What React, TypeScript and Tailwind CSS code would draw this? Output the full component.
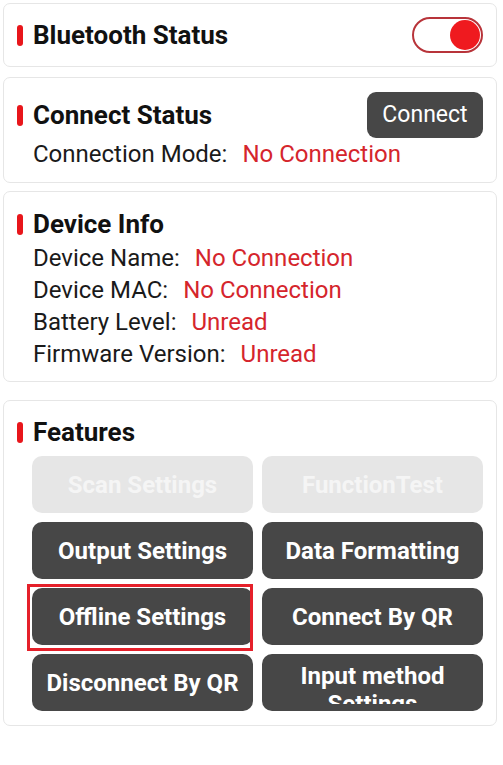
import React from "react";

const font = { fontFamily: "Roboto, 'Noto Sans', sans-serif" };

function Title({ children }: { children: React.ReactNode }) {
  return (
    <div className="flex items-center h-[32px]">
      <span className="block w-[6px] h-[21px] rounded-full bg-[#e8161b] mr-[10px]" />
      <span className="text-[26px] font-bold text-[#111] leading-[32px]">{children}</span>
    </div>
  );
}

function Row({ label, value }: { label: string; value: string }) {
  return (
    <div className="pl-[16px] h-[32px] leading-[32px] text-[24px] whitespace-nowrap">
      <span className="text-[#1a1a1a]">{label}</span>
      <span className="ml-[15px] text-[#d5252c]">{value}</span>
    </div>
  );
}

function Btn({ label, disabled, clip }: { label: string; disabled?: boolean; clip?: boolean }) {
  return (
    <div
      className={
        "h-[57px] rounded-[10px] flex items-center justify-center text-center font-bold text-[24px] px-[8px] overflow-hidden " +
        (disabled ? "bg-[#e6e6e6] text-[#f5f5f5]" : "bg-[#474747] text-white")
      }
    >
      {clip ? (
        <div className="h-[42px] overflow-hidden self-start mt-[8px] leading-[28px]">
          Input method
          <br />
          Settings
        </div>
      ) : (
        <span className="leading-[28px] whitespace-nowrap">{label}</span>
      )}
    </div>
  );
}

export default function App() {
  return (
    <div className="w-[503px] h-[765px] bg-white pt-[3px]" style={font}>
      <div className="ml-[3px] mr-[6px] border border-[#e6e6e6] rounded-[7px] px-[13px] py-[13px] flex items-center justify-between">
        <Title>Bluetooth Status</Title>
        <div className="w-[71px] h-[36px] rounded-full border-2 border-[#b8343a] bg-white flex items-center justify-end pr-[1px]">
          <div className="w-[30px] h-[30px] rounded-full bg-[#ef1a1f]" />
        </div>
      </div>

      <div className="mt-[10px] ml-[3px] mr-[6px] border border-[#e6e6e6] rounded-[7px] px-[13px] pt-[14px] pb-[12px]">
        <div className="flex items-center justify-between">
          <Title>Connect Status</Title>
          <div className="w-[116px] h-[46px] rounded-[9px] bg-[#474747] text-white text-[23px] flex items-center justify-center">
            Connect
          </div>
        </div>
        <Row label="Connection Mode:" value="No Connection" />
      </div>

      <div className="mt-[8px] ml-[3px] mr-[6px] border border-[#e6e6e6] rounded-[7px] px-[13px] pt-[16px] pb-[11px]">
        <Title>Device Info</Title>
        <div className="mt-[2px]">
          <Row label="Device Name:" value="No Connection" />
          <Row label="Device MAC:" value="No Connection" />
          <Row label="Battery Level:" value="Unread" />
          <Row label="Firmware Version:" value="Unread" />
        </div>
      </div>

      <div className="mt-[18px] ml-[3px] mr-[6px] border border-[#e6e6e6] rounded-[7px] px-[13px] pt-[15px] pb-[14px]">
        <Title>Features</Title>
        <div className="ml-[15px] mt-[8px] grid grid-cols-2 gap-x-[9px] gap-y-[9px]">
          <Btn label="Scan Settings" disabled />
          <Btn label="FunctionTest" disabled />
          <Btn label="Output Settings" />
          <Btn label="Data Formatting" />
          <div className="relative">
            <Btn label="Offline Settings" />
            <div className="absolute left-[-5px] top-[-4px] right-0 bottom-[-6px] border-[3px] border-[#e5202a] pointer-events-none" />
          </div>
          <Btn label="Connect By QR" />
          <Btn label="Disconnect By QR" />
          <Btn label="Input method Settings" clip />
        </div>
      </div>
    </div>
  );
}
